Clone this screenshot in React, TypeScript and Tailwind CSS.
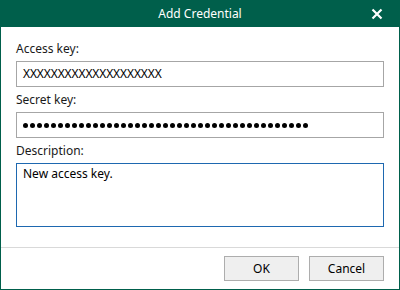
import React from "react";

const font = { fontFamily: '"Noto Sans", "Open Sans", sans-serif' };

function Label({ children }: { children: React.ReactNode }) {
  return <div className="h-[25px] pt-[5px] text-[12px] leading-[16px] text-[#1a1a1a]">{children}</div>;
}

export default function App() {
  const dots = Array.from({ length: 41 });

  return (
    <div
      className="flex h-[290px] w-[400px] flex-col border border-[#005f4b] bg-white text-[12px]"
      style={font}
    >
      {/* Title bar */}
      <div className="relative h-[26px] bg-[#005f4b] text-center text-[12px] leading-[26px] text-white">
        Add Credential
        <button type="button" className="absolute right-[16px] top-[7px] h-[12px] w-[12px]">
          <svg viewBox="0 0 12 12" width="12" height="12">
            <path d="M1.5 1.5 L10.5 10.5 M10.5 1.5 L1.5 10.5" stroke="white" strokeWidth="2.2" />
          </svg>
        </button>
      </div>

      {/* Form */}
      <div className="px-[15px] pt-[9px]">
        <Label>Access key:</Label>
        <div className="flex h-[26px] items-center border border-[#a6a6a6] pl-[6px] leading-[16px] tracking-[-0.1px] text-black">
          XXXXXXXXXXXXXXXXXXXX
        </div>

        <Label>Secret key:</Label>
        <div className="flex h-[26px] items-center gap-[2px] border border-[#a6a6a6] pl-[6px]">
          {dots.map((_, i) => (
            <span key={i} className="h-[5px] w-[5px] rounded-full bg-black" />
          ))}
        </div>

        <Label>Description:</Label>
        <div className="h-[64px] border border-[#1e68b0] pl-[6px] pt-[2px] leading-[16px] text-black">
          New access key.
        </div>
      </div>

      {/* Footer */}
      <div className="mt-[20px] border-t border-[#d9d9d9] px-[15px] pt-[8px]">
        <div className="flex justify-end gap-[10px]">
          <button
            type="button"
            className="h-[25px] w-[75px] border border-[#adadad] bg-[#efefef] text-[12px] leading-[16px] text-black"
          >
            OK
          </button>
          <button
            type="button"
            className="h-[25px] w-[75px] border border-[#adadad] bg-[#efefef] text-[12px] leading-[16px] text-black"
          >
            Cancel
          </button>
        </div>
      </div>
    </div>
  );
}
